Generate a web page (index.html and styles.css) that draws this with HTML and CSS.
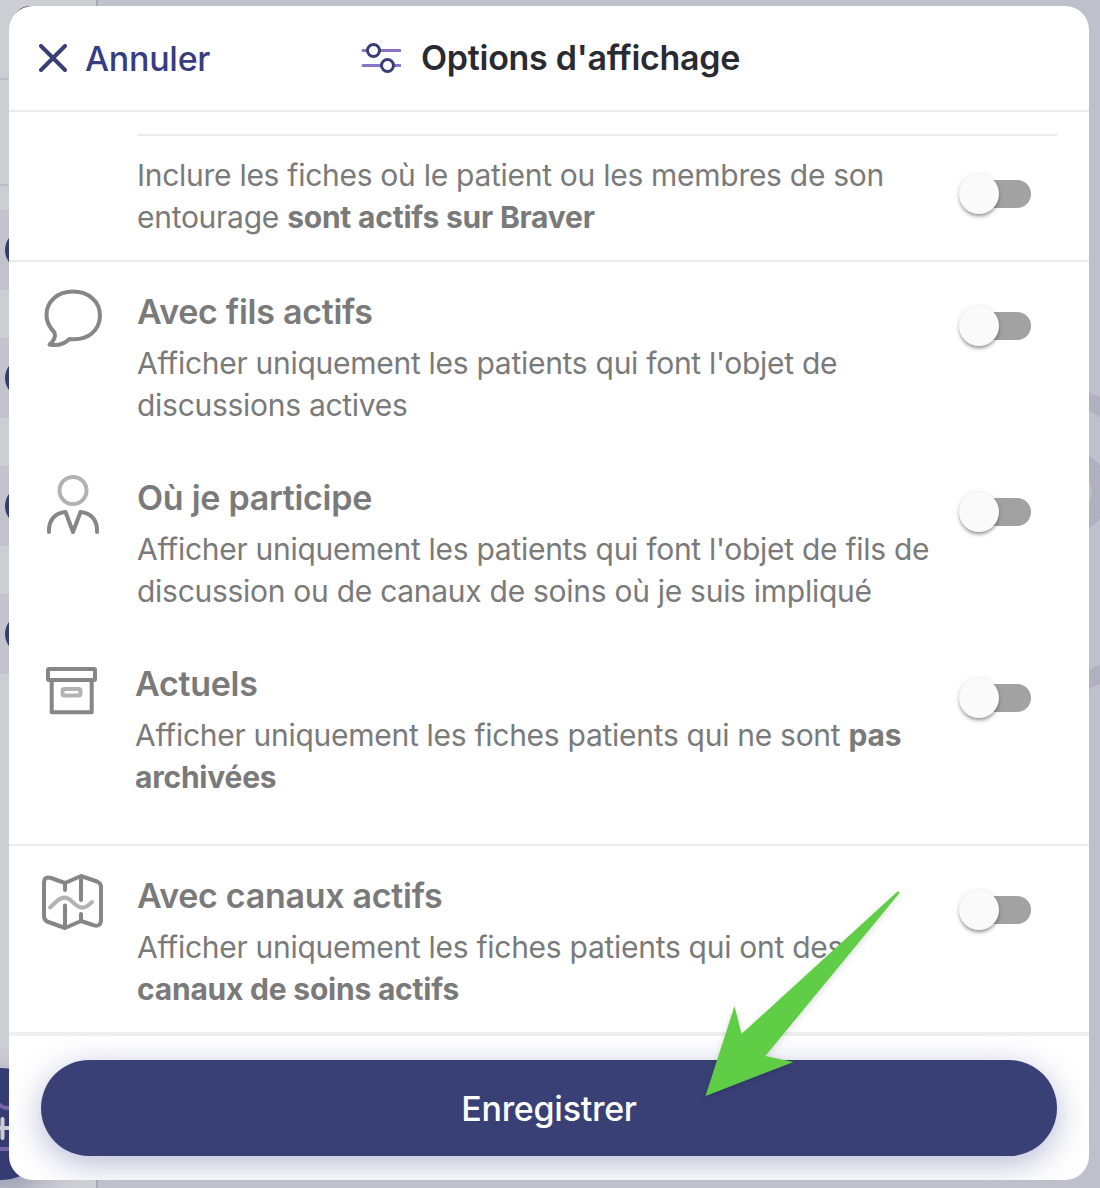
FILE: index.html
```html
<!DOCTYPE html>
<html lang="fr">
<head>
<meta charset="utf-8">
<title>Options d'affichage</title>
<link rel="stylesheet" href="styles.css">
</head>
<body>
<svg class="backdrop" width="1100" height="1188" viewBox="0 0 1100 1188" aria-hidden="true">
  <defs>
    <filter id="soft" x="-50%" y="-50%" width="200%" height="200%"><feGaussianBlur stdDeviation="14"/></filter>
  </defs>
  <rect width="1100" height="1188" fill="#c0c0cd"/>
  <rect width="96" height="1188" fill="#cdced4"/>
  <rect x="96" width="2" height="1188" fill="#a9a9b6"/>
  <path d="M0 79H96M0 185H96" stroke="#bebec6" stroke-width="2"/>
  <path d="M0 210H96V290H0zM0 338H96V418H0zM0 466H96V546H0zM0 594H96V674H0z" fill="#c3c3cf"/>
  <g fill="#353c72"><circle cx="25" cy="250" r="20"/><circle cx="25" cy="378" r="20"/><circle cx="25" cy="506" r="20"/><circle cx="25" cy="634" r="20"/><circle cx="30" cy="23" r="17"/></g>
  <circle cx="0" cy="1134" r="62" fill="#353c72" opacity=".3" filter="url(#soft)"/>
  <circle cx="0" cy="1124" r="56" fill="#353c72"/>
  <path d="M-4 1100Q0 1108 8 1108H12M-4 1149H12" fill="none" stroke="#7864a8" stroke-width="4"/>
  <path d="M2.500 1119V1138M-6 1128H12" stroke="#cdced4" stroke-width="4" stroke-linecap="round"/>
  <circle cx="1027" cy="540.500" r="152" fill="none" stroke="#afb1c0" stroke-width="17"/>
  <circle cx="1067.500" cy="492" r="33" fill="none" stroke="#afb1c0" stroke-width="18"/>
</svg>
<main class="modal">
  <header class="header">
    <button class="cancel">
      <svg width="28" height="28" viewBox="0 0 28 28"><path d="M2 2 26 26M26 2 2 26" stroke="#393f76" stroke-width="4" stroke-linecap="round"/></svg>
      <span>Annuler</span>
    </button>
    <h1 class="title">
      <svg width="40" height="32" viewBox="0 0 40 32" fill="none"><path d="M2 8.500H39M2 23.500H39" stroke="#8a72c4" stroke-width="3" stroke-linecap="round"/><g fill="#fff" stroke="#393f76" stroke-width="3"><circle cx="12.500" cy="8.500" r="6"/><circle cx="26.500" cy="23.500" r="6"/></g></svg>
      <span>Options d'affichage</span>
    </h1>
  </header>
  <div class="options">
    <section class="row row-continued">
      <p class="desc">Inclure les fiches où le patient ou les membres de son<br>entourage <b>sont actifs sur Braver</b></p>
      <span class="switch"></span>
    </section>
    <section class="group">
      <div class="row">
        <svg class="icon" width="64" height="64" viewBox="0 0 64 64" fill="none" stroke="#868686" stroke-width="4" stroke-linecap="round" stroke-linejoin="round"><path d="M32 5.500C16.500 5.500 5.500 15.500 5.500 29C5.500 36 8 41 13.500 46.500C15 51.500 13 55 8.500 58.500C16 60 23 58.500 28.500 53C47 55 59 44 59 29.500C59 15.500 47.500 5.500 32 5.500Z"/></svg>
        <div class="text"><h2>Avec fils actifs</h2><p class="desc">Afficher uniquement les patients qui font l'objet de<br>discussions actives</p></div>
        <span class="switch"></span>
      </div>
      <div class="row">
        <svg class="icon" width="64" height="64" viewBox="0 0 64 64" fill="none" stroke="#868686" stroke-width="4" stroke-linecap="round" stroke-linejoin="round"><circle cx="32" cy="18.500" r="13.500" stroke="#b2b2b2"/><path d="M8 60V58C8 48 14 41 24.500 40L32 60 39.500 40C50 41 56 48 56 58V60"/></svg>
        <div class="text"><h2>Où je participe</h2><p class="desc">Afficher uniquement les patients qui font l'objet de fils de<br>discussion ou de canaux de soins où je suis impliqué</p></div>
        <span class="switch"></span>
      </div>
      <div class="row row-archive">
        <svg class="icon" width="64" height="64" viewBox="0 0 64 64" fill="none" stroke="#868686" stroke-width="4" stroke-linejoin="round"><rect x="7" y="11" width="47" height="11" rx="1"/><path d="M10.700 22V54.300H50.700V22"/><rect x="21.500" y="31" width="18" height="6.500" rx="2" stroke="#b2b2b2"/></svg>
        <div class="text"><h2>Actuels</h2><p class="desc">Afficher uniquement les fiches patients qui ne sont <b>pas<br>archivées</b></p></div>
        <span class="switch"></span>
      </div>
    </section>
    <section class="row row-channels">
      <svg class="icon" width="64" height="64" viewBox="0 0 64 64" fill="none" stroke="#868686" stroke-width="4" stroke-linecap="round" stroke-linejoin="round"><path d="M3 13Q3 6 10 8L24 13 40 6 56 11.500Q60 13 60 17V49Q60 58 52 55L40 51 24 58 6 51.500Q3 50 3 46ZM24 13V20M24 35.500V58M40 6V30M40 44V51"/><path d="M9 37.500 16 31Q24 24 31 31.500L35 35Q41 40 47 35.500L51 32" stroke="#b2b2b2"/></svg>
      <div class="text"><h2>Avec canaux actifs</h2><p class="desc">Afficher uniquement les fiches patients qui ont des<br><b>canaux de soins actifs</b></p></div>
      <span class="switch"></span>
    </section>
  </div>
  <footer class="footer"><button class="save">Enregistrer</button></footer>
</main>
<svg class="arrow" width="220" height="230" viewBox="690 880 220 230" aria-hidden="true"><path d="M705.500 1096 734.500 1006 741.500 1034 897.500 891.500Q900 891 899.500 893L765.300 1056 793.500 1062Z" fill="#5fcd46"/></svg>
</body>
</html>
```
FILE: styles.css
```css
* { box-sizing: border-box; }
body { margin: 0; width: 1100px; height: 1188px; padding: 6px 11px 8px 9px; position: relative; overflow: hidden; font-family: Inter, "Liberation Sans", sans-serif; color: #7a7a7a; }
h1, h2, p { margin: 0; }
button { border: 0; padding: 0; background: none; font: inherit; }
.backdrop { position: absolute; left: 0; top: 0; }
.modal { position: relative; display: flex; flex-direction: column; height: 1174px; background: #fff; border-radius: 24px; overflow: hidden; }
.header { display: flex; align-items: center; height: 106px; padding-left: 30px; border-bottom: 2px solid #ebebeb; }
.cancel { display: flex; align-items: center; gap: 18px; width: 322px; color: #373e80; font-size: 34px; font-weight: 500; line-height: 42px; letter-spacing: -.28px; }
.cancel span { padding-top: 2px; }
.title { display: flex; align-items: center; gap: 20px; color: #2a2a33; font-size: 34px; font-weight: 600; line-height: 42px; letter-spacing: -.28px; }
.options { height: 920px; }
.row { display: flex; align-items: flex-start; height: 186px; padding: 24px 58px 0 32px; }
.text { flex: 1; margin-left: 32px; padding-top: 1px; white-space: nowrap; }
.icon { flex: none; }
h2 { font-size: 34px; font-weight: 600; line-height: 50px; height: 55px; color: #7a7a7a; letter-spacing: -.28px; }
.desc { font-size: 30px; font-weight: 400; line-height: 42px; letter-spacing: -.28px; white-space: nowrap; }
b { font-weight: 700; letter-spacing: -.22px; }
.switch { flex: none; position: relative; width: 68px; height: 28px; margin-top: 26px; border-radius: 14px; background: #a2a2a2; }
.switch::before { content: ""; position: absolute; left: -4px; top: -6px; width: 40px; height: 40px; border-radius: 50%; background: #fafafa; box-shadow: 0 4px 4px -2px rgba(0,0,0,.25), 0 2px 3px rgba(0,0,0,.16), 0 1px 6px rgba(0,0,0,.12); }
.row-continued { justify-content: space-between; height: 126px; margin: 22px 32px 0 128px; padding: 18px 26px 0 0; border-top: 2px solid #ebebeb; }
.group { height: 584px; border-top: 2px solid #ebebeb; }
.row-archive .text { margin-left: 30px; }
.row-channels { height: 188px; border-top: 2px solid #ebebeb; }
.footer { flex: 1; padding: 24px 32px; border-top: 4px solid #efefef; }
.save { display: block; width: 1016px; height: 96px; border-radius: 48px; background: #394076; color: #fff; font-size: 34px; font-weight: 500; letter-spacing: -.28px; box-shadow: 0 8px 32px rgba(57,63,138,.36); }
.arrow { position: absolute; left: 690px; top: 880px; filter: drop-shadow(0 2px 3px rgba(0,0,0,.15)); }
```
